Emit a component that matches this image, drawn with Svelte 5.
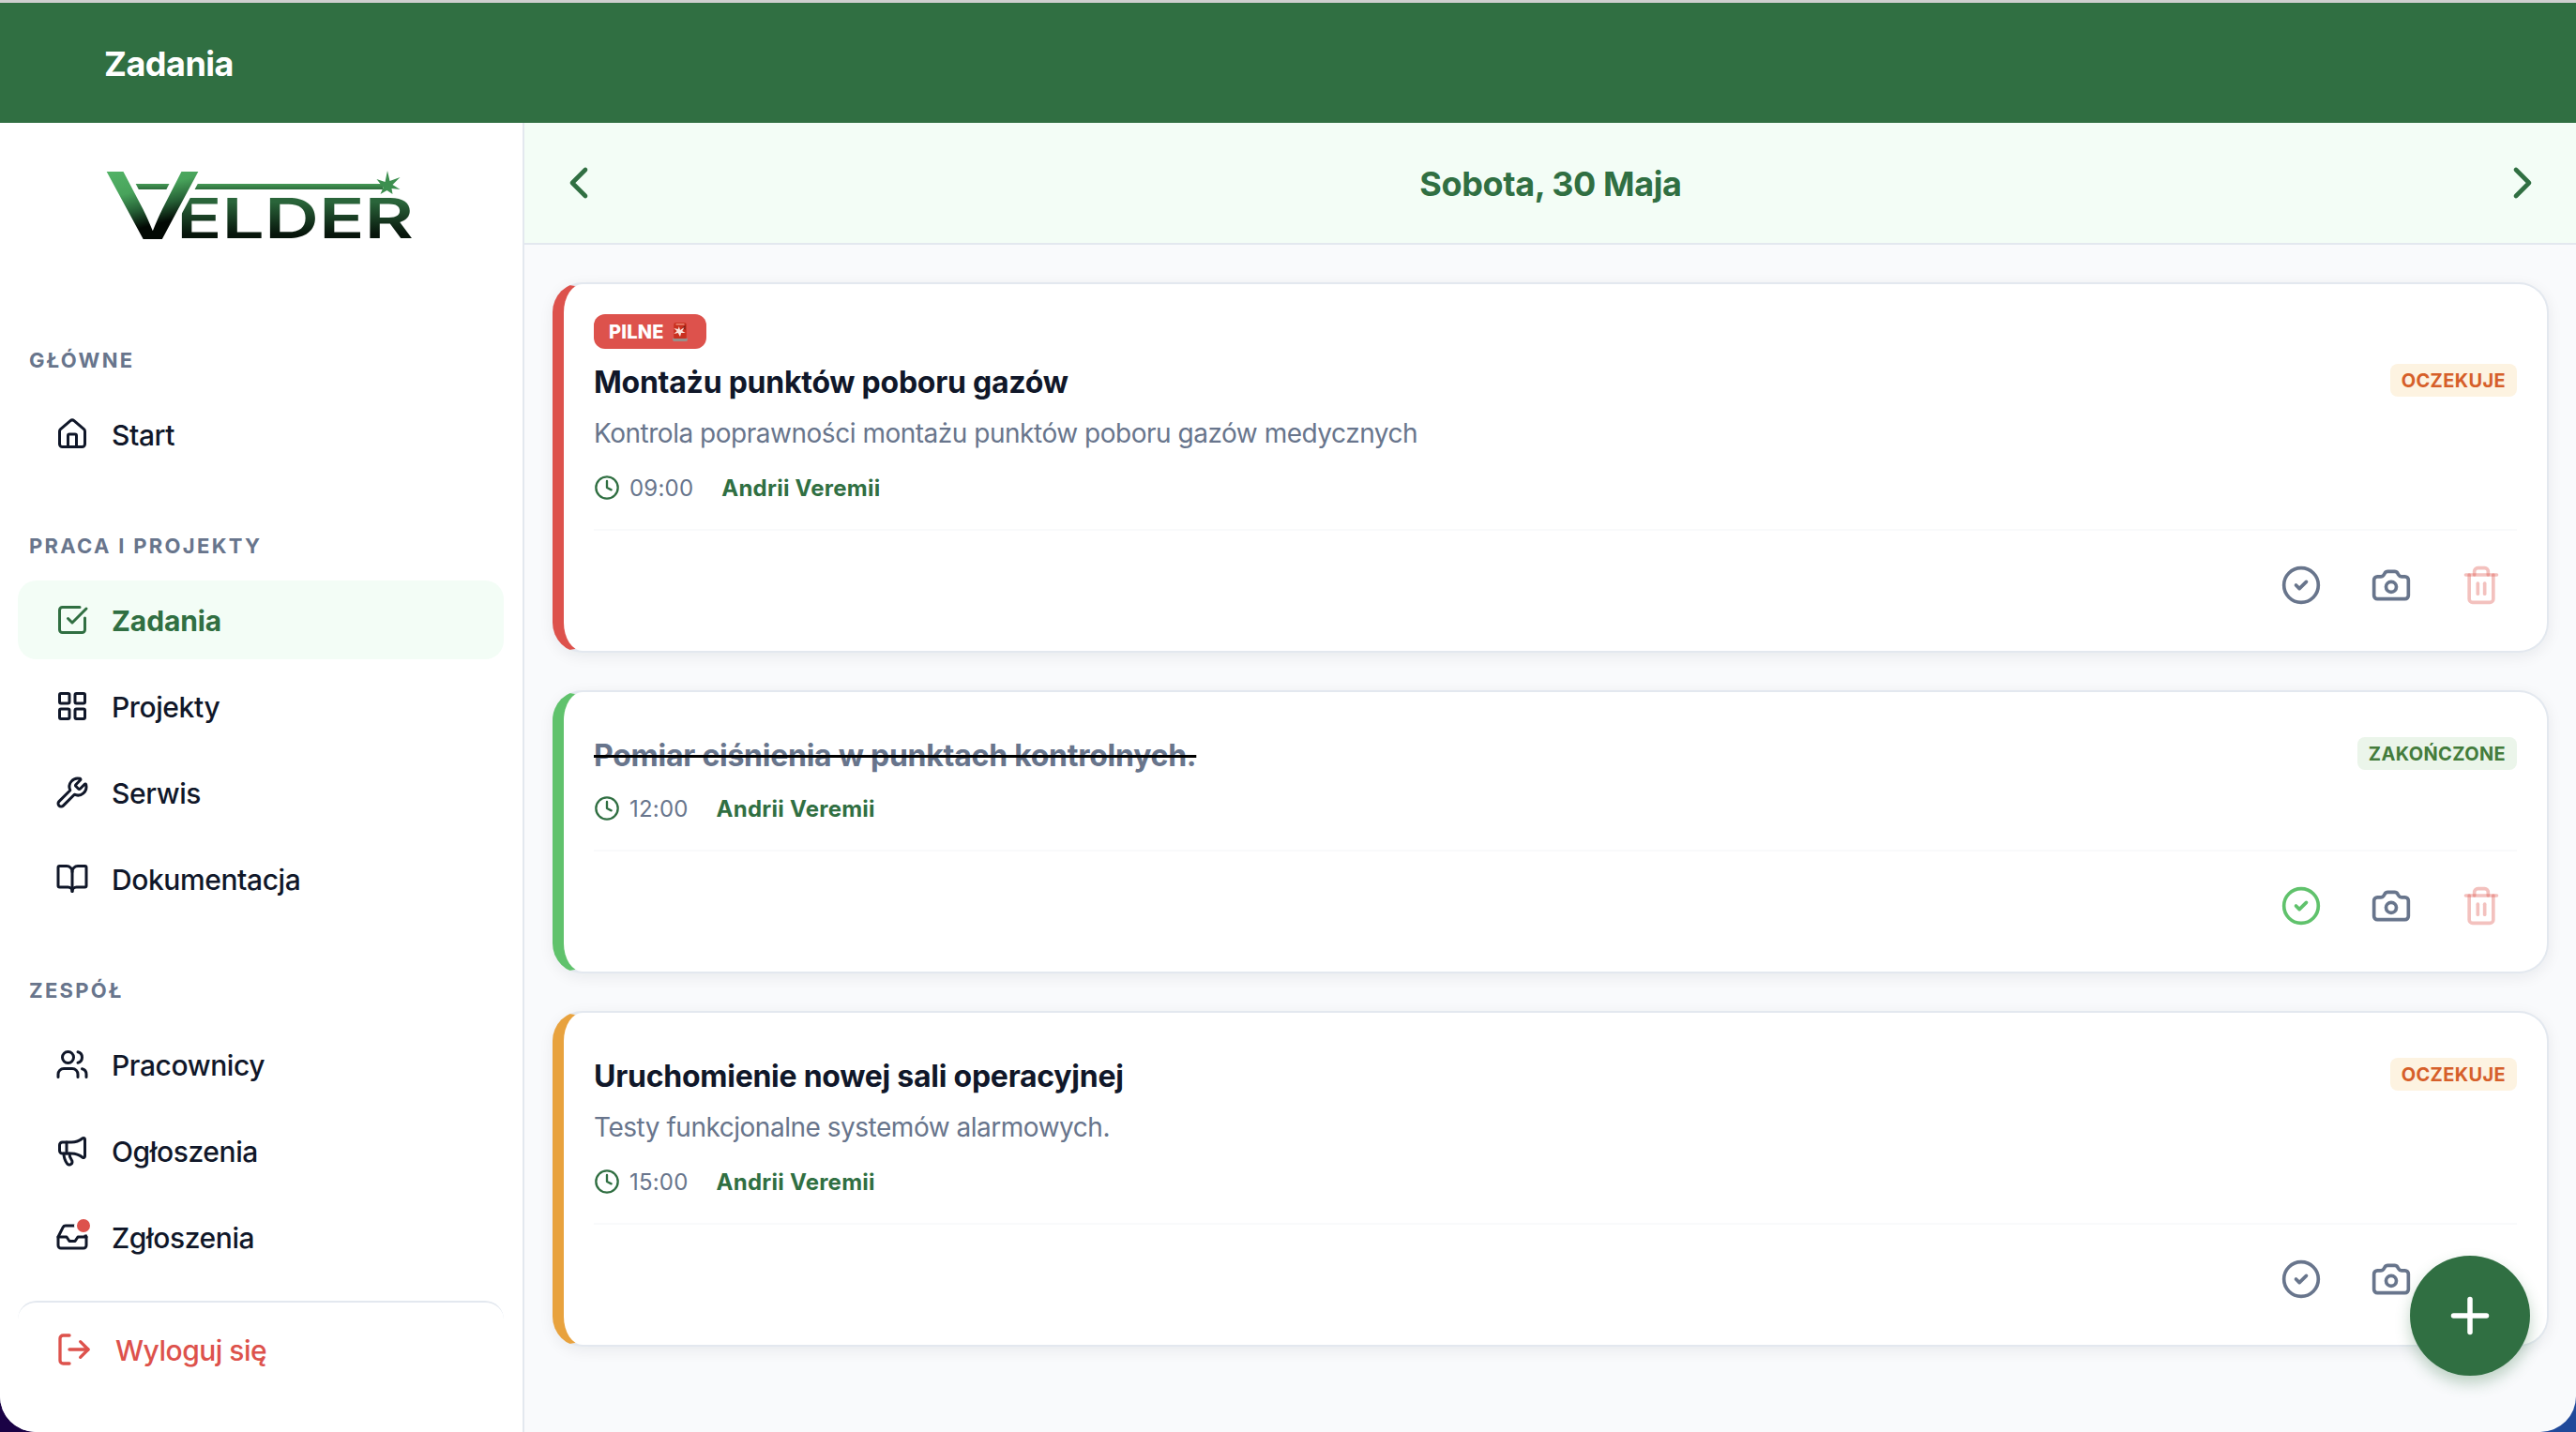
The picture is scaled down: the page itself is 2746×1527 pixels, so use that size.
<script>
    const icons = {
        home: [
            "M15 21v-8a1 1 0 0 0-1-1h-4a1 1 0 0 0-1 1v8",
            "M3 10a2 2 0 0 1 .709-1.528l7-6a2 2 0 0 1 2.582 0l7 6A2 2 0 0 1 21 10v9a2 2 0 0 1-2 2H5a2 2 0 0 1-2-2z"
        ],
        tasks: [
            "M21 10.656V19a2 2 0 0 1-2 2H5a2 2 0 0 1-2-2V5a2 2 0 0 1 2-2h12.344",
            "m9 11 3 3L22 4"
        ],
        grid: [
            "M4 3h5a1 1 0 0 1 1 1v5a1 1 0 0 1-1 1H4a1 1 0 0 1-1-1V4a1 1 0 0 1 1-1z",
            "M15 3h5a1 1 0 0 1 1 1v5a1 1 0 0 1-1 1h-5a1 1 0 0 1-1-1V4a1 1 0 0 1 1-1z",
            "M15 14h5a1 1 0 0 1 1 1v5a1 1 0 0 1-1 1h-5a1 1 0 0 1-1-1v-5a1 1 0 0 1 1-1z",
            "M4 14h5a1 1 0 0 1 1 1v5a1 1 0 0 1-1 1H4a1 1 0 0 1-1-1v-5a1 1 0 0 1 1-1z"
        ],
        wrench: [
            "M14.7 6.3a1 1 0 0 0 0 1.4l1.6 1.6a1 1 0 0 0 1.4 0l3.106-3.105c.32-.322.863-.22.983.218a6 6 0 0 1-8.259 7.057l-7.91 7.91a1 1 0 0 1-2.999-3l7.91-7.91a6 6 0 0 1 7.057-8.259c.438.12.54.662.219.984z"
        ],
        book: [
            "M12 7v14",
            "M3 18a1 1 0 0 1-1-1V4a1 1 0 0 1 1-1h5a4 4 0 0 1 4 4 4 4 0 0 1 4-4h5a1 1 0 0 1 1 1v13a1 1 0 0 1-1 1h-6a3 3 0 0 0-3 3 3 3 0 0 0-3-3z"
        ],
        users: [
            "M16 21v-2a4 4 0 0 0-4-4H6a4 4 0 0 0-4 4v2",
            "M16 3.128a4 4 0 0 1 0 7.744",
            "M22 21v-2a4 4 0 0 0-3-3.87",
            "M5 7a4 4 0 1 0 8 0a4 4 0 1 0-8 0"
        ],
        megaphone: [
            "M11 6a13 13 0 0 0 8.4-2.8A1 1 0 0 1 21 4v12a1 1 0 0 1-1.6.8A13 13 0 0 0 11 14H5a2 2 0 0 1-2-2V8a2 2 0 0 1 2-2z",
            "M6 14a12 12 0 0 0 2.4 7.2 2 2 0 0 0 3.2-2.4A8 8 0 0 1 10 14",
            "M8 6v8"
        ],
        inbox: [
            "M22 12h-6l-2 3h-4l-2-3H2",
            "M5.45 5.11 2 12v6a2 2 0 0 0 2 2h16a2 2 0 0 0 2-2v-6l-3.45-6.89A2 2 0 0 0 16.76 4H7.24a2 2 0 0 0-1.79 1.11z"
        ],
        logout: [
            "m16 17 5-5-5-5",
            "M21 12H9",
            "M9 21H5a2 2 0 0 1-2-2V5a2 2 0 0 1 2-2h4"
        ],
        clock: [
            "M2 12a10 10 0 1 0 20 0a10 10 0 1 0-20 0",
            "M12 6v6l4 2"
        ],
        check: [
            "M2 12a10 10 0 1 0 20 0a10 10 0 1 0-20 0",
            "m9 12 2 2 4-4"
        ],
        camera: [
            "M13.997 4a2 2 0 0 1 1.76 1.05l.486.9A2 2 0 0 0 18.003 7H20a2 2 0 0 1 2 2v9a2 2 0 0 1-2 2H4a2 2 0 0 1-2-2V9a2 2 0 0 1 2-2h1.997a2 2 0 0 0 1.759-1.048l.489-.904A2 2 0 0 1 10.004 4z",
            "M9 13a3 3 0 1 0 6 0a3 3 0 1 0-6 0"
        ],
        trash: [
            "M10 11v6",
            "M14 11v6",
            "M19 6v14a2 2 0 0 1-2 2H7a2 2 0 0 1-2-2V6",
            "M3 6h18",
            "M8 6V4a2 2 0 0 1 2-2h4a2 2 0 0 1 2 2v2"
        ],
        prev: ["m15 18-6-6 6-6"],
        next: ["m9 18 6-6-6-6"],
        plus: ["M5 12h14", "M12 5v14"]
    };

    const sections = [
        {
            label: "GŁÓWNE",
            items: [{ name: "Start", icon: "home" }]
        },
        {
            label: "PRACA I PROJEKTY",
            items: [
                { name: "Zadania", icon: "tasks" },
                { name: "Projekty", icon: "grid" },
                { name: "Serwis", icon: "wrench" },
                { name: "Dokumentacja", icon: "book" }
            ]
        },
        {
            label: "ZESPÓŁ",
            items: [
                { name: "Pracownicy", icon: "users" },
                { name: "Ogłoszenia", icon: "megaphone" },
                { name: "Zgłoszenia", icon: "inbox", unread: true }
            ]
        }
    ];

    let active = $state("Zadania");

    let tasks = $state([
        {
            title: "Montażu punktów poboru gazów",
            description: "Kontrola poprawności montażu punktów poboru gazów medycznych",
            time: "09:00",
            worker: "Andrii Veremii",
            priority: "urgent",
            done: false
        },
        {
            title: "Pomiar ciśnienia w punktach kontrolnych.",
            description: "",
            time: "12:00",
            worker: "Andrii Veremii",
            priority: "normal",
            done: true
        },
        {
            title: "Uruchomienie nowej sali operacyjnej",
            description: "Testy funkcjonalne systemów alarmowych.",
            time: "15:00",
            worker: "Andrii Veremii",
            priority: "normal",
            done: false
        }
    ]);
</script>

{#snippet icon(name, size, stroke = 2)}
    <svg
        class="icon"
        width={size}
        height={size}
        viewBox="0 0 24 24"
        fill="none"
        stroke="currentColor"
        stroke-width={stroke}
        stroke-linecap="round"
        stroke-linejoin="round"
    >
        {#each icons[name] as d}
            <path {d} />
        {/each}
    </svg>
{/snippet}

<div class="app">
    <header class="topbar">
        <h1>Zadania</h1>
    </header>

    <div class="layout">
        <aside class="sidebar">
            <svg class="logo" width="350" height="130" viewBox="-10 -24 350 130">
                <defs>
                    <linearGradient id="mark" gradientUnits="userSpaceOnUse" x1="10" y1="2" x2="28" y2="74">
                        <stop offset="0" stop-color="#52b266" />
                        <stop offset="0.35" stop-color="#48a35b" />
                        <stop offset="0.62" stop-color="#255f35" />
                        <stop offset="0.88" stop-color="#020803" />
                    </linearGradient>
                    <linearGradient id="word" gradientUnits="userSpaceOnUse" x1="0" y1="30" x2="0" y2="73">
                        <stop offset="0.1" stop-color="#2a653a" />
                        <stop offset="0.9" stop-color="#07150b" />
                    </linearGradient>
                    <linearGradient id="beam" x1="0" y1="0" x2="0" y2="1">
                        <stop offset="0" stop-color="#459a56" />
                        <stop offset="1" stop-color="#2d6c3c" />
                    </linearGradient>
                </defs>
                <path d="M24 15h48l-4 6H27z" fill="url(#beam)" />
                <path d="M90 15h206v6H90z" fill="url(#beam)" />
                <path d="M301 1l2.500 11 11-4-8 8 8 5-9-1 1 6-6-4-7 4 3-7-7-9 9 3z" fill="#3c8f4f" />
                <text class="logo-word" x="76" y="73" textLength="253" lengthAdjust="spacingAndGlyphs" fill="url(#word)">ELDER</text>
                <text class="logo-mark" x="-2" y="74" textLength="105" lengthAdjust="spacingAndGlyphs" fill="url(#mark)">V</text>
            </svg>

            <nav>
                {#each sections as section}
                    <div class="section">
                        <span class="section-label">{section.label}</span>
                        {#each section.items as item}
                            <button class="nav-item" class:active={item.name === active} onclick={() => (active = item.name)}>
                                <span class="nav-icon">
                                    {@render icon(item.icon, 36)}
                                    {#if item.unread}<span class="dot"></span>{/if}
                                </span>
                                <span class="nav-text">{item.name}</span>
                            </button>
                        {/each}
                    </div>
                {/each}
            </nav>

            <button class="logout">
                {@render icon("logout", 40)}
                <span class="nav-text">Wyloguj się</span>
            </button>
        </aside>

        <main>
            <div class="date-bar">
                <button class="plain">{@render icon("prev", 56)}</button>
                <h2>Sobota, 30 Maja</h2>
                <button class="plain">{@render icon("next", 56)}</button>
            </div>

            <div class="tasks">
                {#each tasks as task}
                    <article class="card {task.priority}" class:done={task.done}>
                        {#if task.priority === "urgent"}
                            <div class="urgent-badge">
                                PILNE
                                <svg width="18" height="22" viewBox="0 0 16 22" preserveAspectRatio="none">
                                    <rect x="1" y="17" width="14" height="4" rx="1.5" fill="#9a8f8a" />
                                    <path d="M2 18V3q0-2 2-2h8q2 0 2 2v15z" fill="#c9301f" />
                                    <path d="M4 2h8v1.500H4z" fill="#ef8a78" />
                                    <path d="M10 6q3-1 3-4v7z" fill="#7d1a12" />
                                    <path d="M7 5l1 4 4-3-2 4 3 2h-4l-1 4-2-4-4 1 3-3-3-3 4 1z" fill="#fbe4de" />
                                </svg>
                            </div>
                        {/if}
                        <div class="card-header">
                            <h3>{task.title}</h3>
                            <span class="status">{task.done ? "ZAKOŃCZONE" : "OCZEKUJE"}</span>
                        </div>
                        {#if task.description}
                            <p class="description">{task.description}</p>
                        {/if}
                        <div class="meta">
                            {@render icon("clock", 28)}
                            <span class="time">{task.time}</span>
                            <span class="worker">{task.worker}</span>
                        </div>
                        <div class="actions">
                            <button class="action complete" onclick={() => (task.done = !task.done)}>{@render icon("check", 44)}</button>
                            <button class="action">{@render icon("camera", 44)}</button>
                            <button class="action remove">{@render icon("trash", 44)}</button>
                        </div>
                    </article>
                {/each}
            </div>
        </main>
    </div>

    <button class="fab">{@render icon("plus", 60, 2.2)}</button>
</div>

<style>
    :global(body) {
        margin: 0;
        background: linear-gradient(90deg, #1a0245 50%, #20499a 50%);
    }

    .app {
        --green: #306f42;
        --mint: #f3fdf6;
        --text: #101729;
        --muted: #68758c;
        --line: #e3e8ef;
        --red: #dd524c;

        position: relative;
        display: flex;
        flex-direction: column;
        box-sizing: border-box;
        height: 1527px;
        overflow: hidden;
        border-top: 3px solid #cfcfcf;
        border-radius: 0 0 38px 38px;
        background: #f9fafc;
        color: var(--text);
        font-family: Inter, "Liberation Sans", sans-serif;
    }

    h1, h2, h3, p {
        margin: 0;
    }

    button {
        padding: 0;
        border: none;
        background: none;
        color: inherit;
        font: inherit;
        text-align: left;
        cursor: pointer;
    }

    .icon {
        display: block;
        flex-shrink: 0;
    }

    .topbar {
        display: flex;
        align-items: center;
        height: 128px;
        padding: 0 111px;
        background: var(--green);
        color: white;
    }

    .topbar h1 {
        padding-top: 2px;
        font-size: 36px;
        font-weight: 700;
        letter-spacing: -0.5px;
    }

    .layout {
        display: flex;
        flex: 1;
        min-height: 0;
    }

    /* sidebar */
    .sidebar {
        display: flex;
        flex-direction: column;
        box-sizing: border-box;
        width: 559px;
        padding: 26px 20px 0 19px;
        border-right: 2px solid var(--line);
        background: white;
    }

    .logo {
        margin-left: 83px;
        flex-shrink: 0;
    }

    /* white outline keeps the V clear of the beam and the first letter */
    .logo-mark {
        font-size: 99px;
        font-weight: 500;
        stroke: white;
        stroke-width: 8px;
        paint-order: stroke;
    }

    .logo-word {
        font-size: 59px;
        font-weight: 600;
    }

    nav {
        margin-top: 28px;
    }

    .section {
        display: flex;
        flex-direction: column;
        gap: 8px;
        padding-top: 56px;
        padding-bottom: 8px;
    }

    .section-label {
        margin: 0 12px 16px;
        color: var(--muted);
        font-size: 22px;
        font-weight: 700;
        line-height: 26px;
        letter-spacing: 2.3px;
    }

    .nav-item {
        display: flex;
        align-items: center;
        gap: 24px;
        height: 84px;
        padding-left: 40px;
        border-radius: 20px;
        font-size: 30px;
        font-weight: 500;
        letter-spacing: -0.4px;
    }

    .nav-text {
        padding-top: 1px;
    }

    .nav-item.active {
        background: var(--mint);
        color: var(--green);
        font-weight: 700;
        letter-spacing: -0.1px;
    }

    .nav-icon {
        position: relative;
    }

    .dot {
        position: absolute;
        top: -4px;
        right: -4px;
        width: 14px;
        height: 14px;
        border: 3px solid white;
        border-radius: 50%;
        background: var(--red);
    }

    .logout {
        display: flex;
        align-items: center;
        gap: 24px;
        height: 102px;
        margin-top: 18px;
        padding-left: 40px;
        border-top: 2px solid var(--line);
        border-radius: 20px;
        color: var(--red);
        font-size: 30px;
        font-weight: 500;
        letter-spacing: -0.5px;
    }

    /* day switcher */
    main {
        flex: 1;
    }

    .date-bar {
        display: flex;
        align-items: center;
        justify-content: space-between;
        height: 128px;
        padding: 0 29px 0 30px;
        border-bottom: 2px solid var(--line);
        background: var(--mint);
        color: var(--green);
    }

    .date-bar h2 {
        padding-top: 2px;
        font-size: 36px;
        font-weight: 700;
        letter-spacing: -0.4px;
    }

    /* task cards */
    .tasks {
        display: flex;
        flex-direction: column;
        gap: 40px;
        padding: 40px 29px 0 30px;
    }

    .card {
        padding: 32px;
        border: 2px solid var(--line);
        border-left: 12px solid #e8a23e;
        border-radius: 32px;
        background: white;
        box-shadow: 0 4px 16px rgba(15, 23, 42, 0.07);
    }

    .card.urgent {
        border-left-color: var(--red);
    }

    .card.done {
        border-left-color: #60c26c;
    }

    .urgent-badge {
        display: inline-flex;
        align-items: center;
        gap: 8px;
        height: 37px;
        padding: 0 19px 0 16px;
        border-radius: 12px;
        background: var(--red);
        color: white;
        font-size: 20px;
        font-weight: 800;
        letter-spacing: 0.2px;
        vertical-align: top;
    }

    .card-header {
        display: flex;
        align-items: flex-start;
        justify-content: space-between;
        margin: 16px 0;
    }

    .card-header h3 {
        font-size: 32px;
        font-weight: 700;
        line-height: 40px;
        height: 38px;
        letter-spacing: -0.25px;
    }

    .done h3 {
        color: var(--muted);
        text-decoration: line-through 3px black;
        text-decoration-skip-ink: none;
    }

    .status {
        height: 35px;
        padding: 0 12px;
        border-radius: 8px;
        background: #fdf3e1;
        color: #d65f2a;
        font-size: 20px;
        font-weight: 700;
        line-height: 36px;
        letter-spacing: 0.35px;
    }

    .done .status {
        background: #ebf5ea;
        color: #447c3c;
    }

    .description {
        margin-bottom: 16px;
        color: var(--muted);
        font-size: 28px;
        line-height: 40px;
        letter-spacing: -0.48px;
    }

    .meta {
        display: flex;
        align-items: center;
        height: 44px;
        color: var(--green);
        font-size: 24px;
    }

    .time {
        margin: 0 30px 0 10px;
        color: var(--muted);
        letter-spacing: 0.2px;
    }

    .worker {
        font-weight: 700;
        letter-spacing: 0.25px;
    }

    .actions {
        display: flex;
        justify-content: flex-end;
        gap: 20px;
        margin-top: 22px;
        padding-top: 20px;
        border-top: 2px solid #f9fafb;
    }

    .action {
        padding: 16px;
        color: var(--muted);
    }

    .done .complete {
        color: #60c26c;
    }

    .remove {
        color: rgba(221, 82, 76, 0.36);
    }

    .fab {
        position: absolute;
        right: 49px;
        bottom: 60px;
        display: flex;
        align-items: center;
        justify-content: center;
        width: 128px;
        height: 128px;
        border-radius: 50%;
        background: var(--green);
        color: white;
        box-shadow: 0 8px 16px rgba(48, 111, 66, 0.3);
    }
</style>
